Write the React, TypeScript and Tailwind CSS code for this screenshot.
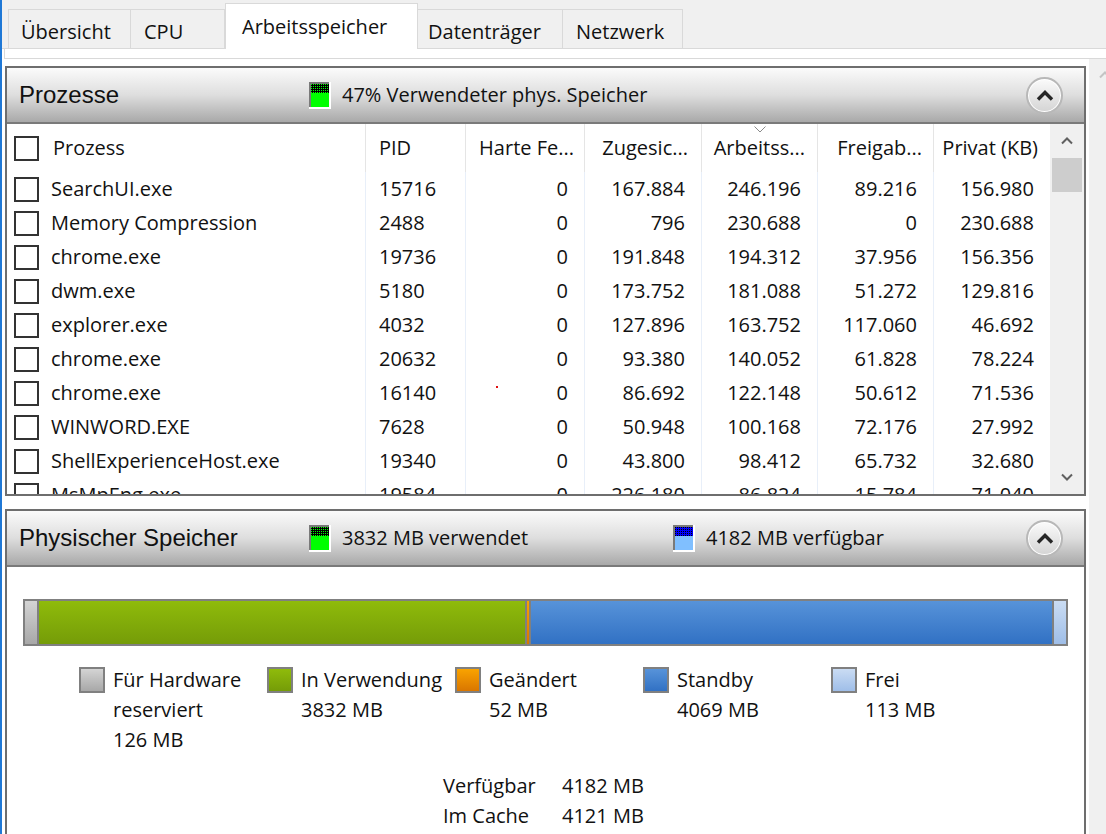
import React from 'react';

const rows = [
  ['SearchUI.exe', '15716', '0', '167.884', '246.196', '89.216', '156.980'],
  ['Memory Compression', '2488', '0', '796', '230.688', '0', '230.688'],
  ['chrome.exe', '19736', '0', '191.848', '194.312', '37.956', '156.356'],
  ['dwm.exe', '5180', '0', '173.752', '181.088', '51.272', '129.816'],
  ['explorer.exe', '4032', '0', '127.896', '163.752', '117.060', '46.692'],
  ['chrome.exe', '20632', '0', '93.380', '140.052', '61.828', '78.224'],
  ['chrome.exe', '16140', '0', '86.692', '122.148', '50.612', '71.536'],
  ['WINWORD.EXE', '7628', '0', '50.948', '100.168', '72.176', '27.992'],
  ['ShellExperienceHost.exe', '19340', '0', '43.800', '98.412', '65.732', '32.680'],
  ['MsMpEng.exe', '19584', '0', '226.180', '86.824', '15.784', '71.040'],
];

const legend = [
  { lines: ['Für Hardware', 'reserviert', '126 MB'], sw: 'from-[#d4d4d4] to-[#a8a8a8]' },
  { lines: ['In Verwendung', '3832 MB'], sw: 'from-[#8fbb0b] to-[#759c08]' },
  { lines: ['Geändert', '52 MB'], sw: 'from-[#f9a300] to-[#d97600]' },
  { lines: ['Standby', '4069 MB'], sw: 'from-[#5793d9] to-[#3171c4]' },
  { lines: ['Frei', '113 MB'], sw: 'from-[#cadcf3] to-[#9fbee8]' },
];

const Checkbox = () => <div className="w-[25px] h-[25px] border-2 border-[#333] bg-white shrink-0" />;

const Chevron = ({ down = false, color = '#606060' }: { down?: boolean; color?: string }) => (
  <svg width="12" height="8" viewBox="0 0 12 8">
    <path d={down ? 'M1 1.5 L6 6.5 L11 1.5' : 'M1 6.5 L6 1.5 L11 6.5'} stroke={color} strokeWidth="2" fill="none" />
  </svg>
);

const CollapseButton = () => (
  <div className="w-[37px] h-[37px] rounded-full border-2 border-[#b8b8b8] bg-linear-to-b from-[#fbfbfb] to-[#d4d4d4] flex items-center justify-center shadow-[inset_0_0_0_1px_#ffffff]">
    <svg width="18" height="11" viewBox="0 0 18 11">
      <path d="M2 9.5 L9 2.5 L16 9.5" stroke="#262626" strokeWidth="3.4" fill="none" strokeLinejoin="miter" />
    </svg>
  </div>
);

// kleiner Speicher-Chip wie im Task-Manager
const MemIcon = ({ blue = false }: { blue?: boolean }) => (
  <svg width="22" height="27" viewBox="0 0 22 27">
    <defs>
      <pattern id={blue ? 'dotsB' : 'dotsG'} width="2" height="2" patternUnits="userSpaceOnUse">
        <rect width="2" height="2" fill={blue ? '#0000ff' : '#000000'} />
        <rect width="1" height="1" fill={blue ? '#000000' : '#00ff00'} />
      </pattern>
    </defs>
    <rect x="0" y="0" width="22" height="27" fill="#ffffff" />
    <rect x="0" y="0" width="20" height="25" fill="#7a7a7a" />
    <rect x="2" y="2" width="18" height="9" fill={`url(#${blue ? 'dotsB' : 'dotsG'})`} />
    <rect x="2" y="11" width="18" height="14" fill={blue ? '#80bfff' : '#00ff00'} />
  </svg>
);

const PanelHeader = ({ title, children }: { title: string; children: React.ReactNode }) => (
  <div className="h-[56px] flex items-center border-b-2 border-[#7a7a7a] bg-linear-to-b from-[#fbfbfb] via-[#dedede] to-[#a9a9a9]">
    <div className="w-[302px] pl-[12px] text-[24px] text-[#111] font-['Liberation_Sans',Arial,sans-serif]">{title}</div>
    {children}
    <div className="ml-auto mr-[21px]">
      <CollapseButton />
    </div>
  </div>
);

export default function App() {
  const tabs = [
    { name: 'Übersicht', w: 'w-[123px]', pl: 'pl-[12px]' },
    { name: 'CPU', w: 'w-[94px]', pl: 'pl-[13px]' },
    { name: 'Arbeitsspeicher', w: 'w-[193px]', pl: 'pl-[16px]', active: true },
    { name: 'Datenträger', w: 'w-[145px]', pl: 'pl-[10px]' },
    { name: 'Netzwerk', w: 'w-[120px]', pl: 'pl-[13px]' },
  ];

  return (
    <div className="w-[1106px] h-[834px] flex bg-white overflow-hidden text-[20px] text-[#111] font-['Open_Sans','Noto_Sans',sans-serif]">
      <div className="w-[2px] shrink-0 bg-[#1f78d6]" />
      <div className="flex-1 flex flex-col min-w-0">
        {/* Tabs */}
        <div className="h-[49px] shrink-0 flex items-end pl-[6px] bg-[#f0f0f0] border-b border-[#d9d9d9]">
          {tabs.map((t) =>
            t.active ? (
              <div
                key={t.name}
                className={`${t.w} ${t.pl} h-[46px] -mb-px flex items-center bg-white border border-b-0 border-[#d9d9d9] relative z-10`}
              >
                {t.name}
              </div>
            ) : (
              <div
                key={t.name}
                className={`${t.w} ${t.pl} h-[39px] flex items-center pt-[5px] bg-[#f0f0f0] border border-b-0 border-l-0 first:border-l border-[#d9d9d9]`}
              >
                {t.name}
              </div>
            )
          )}
        </div>
        <div className="h-[10px] shrink-0 ml-[2px] border-l border-b border-[#d9d9d9]" />

        <div className="flex-1 flex min-h-0">
          <div className="w-[3px] shrink-0" />
          <div className="w-[1081px] shrink-0 pt-[7px] flex flex-col gap-[13px]">
            {/* Prozesse */}
            <div className="border-2 border-[#6e6e6e] flex flex-col">
              <PanelHeader title="Prozesse">
                <div className="flex items-center gap-[11px]">
                  <MemIcon />
                  <span>47% Verwendeter phys. Speicher</span>
                </div>
              </PanelHeader>
              <div className="h-[370px] flex overflow-hidden">
                <div className="w-[1043px] flex flex-col">
                  <div className="h-[48px] shrink-0 flex">
                    <div className="w-[359px] flex items-center pl-[7px] border-r border-[#e5e5e5]">
                      <Checkbox />
                      <span className="ml-[14px]">Prozess</span>
                    </div>
                    <div className="w-[100px] flex items-center pl-[13px] border-r border-[#e5e5e5]">PID</div>
                    <div className="w-[119px] flex items-center justify-end pr-[10px] border-r border-[#e5e5e5]">Harte Fe...</div>
                    <div className="w-[117px] flex items-center justify-end pr-[13px] border-r border-[#e5e5e5]">Zugesic...</div>
                    <div className="w-[116px] flex items-center justify-end pr-[12px] border-r border-[#e5e5e5] relative">
                      <div className="absolute top-[2px] left-[52px]">
                        <svg width="12" height="7" viewBox="0 0 12 7">
                          <path d="M0.5 0.5 L6 6 L11.5 0.5" stroke="#8a8a8a" strokeWidth="1" fill="none" />
                        </svg>
                      </div>
                      Arbeitss...
                    </div>
                    <div className="w-[116px] flex items-center justify-end pr-[11px] border-r border-[#e5e5e5]">Freigab...</div>
                    <div className="w-[116px] flex items-center justify-end pr-[12px]">Privat (KB)</div>
                  </div>
                  {rows.map((r, i) => (
                    <div key={i} className="h-[34px] shrink-0 flex">
                      <div className="w-[359px] flex items-center pl-[7px] border-r border-[#e8eff9]">
                        <Checkbox />
                        <span className="ml-[12px]">{r[0]}</span>
                      </div>
                      <div className="w-[100px] flex items-center pl-[13px] border-r border-[#e8eff9]">{r[1]}</div>
                      <div className="w-[119px] flex items-center justify-end pr-[16px] border-r border-[#e8eff9] relative">
                        {i === 6 && <div className="absolute left-[30px] top-[10px] w-[2px] h-[2px] bg-[#e01010]" />}
                        {r[2]}
                      </div>
                      <div className="w-[117px] flex items-center justify-end pr-[16px] border-r border-[#e8eff9]">{r[3]}</div>
                      <div className="w-[116px] flex items-center justify-end pr-[16px] border-r border-[#e8eff9]">{r[4]}</div>
                      <div className="w-[116px] flex items-center justify-end pr-[16px] border-r border-[#e8eff9]">{r[5]}</div>
                      <div className="w-[116px] flex items-center justify-end pr-[16px]">{r[6]}</div>
                    </div>
                  ))}
                </div>
                {/* Scrollbar */}
                <div className="w-[34px] bg-[#f0f0f0] flex flex-col">
                  <div className="h-[34px] flex items-center justify-center">
                    <Chevron />
                  </div>
                  <div className="h-[34px] mx-[2px] bg-[#cdcdcd]" />
                  <div className="flex-1" />
                  <div className="h-[34px] flex items-center justify-center">
                    <Chevron down />
                  </div>
                </div>
              </div>
            </div>

            {/* Physischer Speicher */}
            <div className="border-2 border-b-0 border-[#6e6e6e] flex-1 flex flex-col">
              <PanelHeader title="Physischer Speicher">
                <div className="w-[364px] flex items-center gap-[11px]">
                  <MemIcon />
                  <span>3832 MB verwendet</span>
                </div>
                <div className="flex items-center gap-[11px]">
                  <MemIcon blue />
                  <span>4182 MB verfügbar</span>
                </div>
              </PanelHeader>
              <div className="flex-1 bg-white pt-[32px] px-[16px]">
                <div className="h-[47px] border-2 border-[#808080] flex">
                  <div className="w-[14px] border-r-2 border-[#808080] bg-linear-to-b from-[#d4d4d4] to-[#a8a8a8]" />
                  <div className="w-[488px] border-r-2 border-[#808080] bg-linear-to-b from-[#8fbb0b] to-[#759c08]" />
                  <div className="w-[4px] border-r-2 border-[#808080] bg-linear-to-b from-[#f9a300] to-[#d97600]" />
                  <div className="flex-1 border-r-2 border-[#808080] bg-linear-to-b from-[#5793d9] to-[#3171c4]" />
                  <div className="w-[12px] bg-linear-to-b from-[#cadcf3] to-[#9fbee8]" />
                </div>
                <div className="flex mt-[19px] ml-[56px]">
                  {legend.map((l) => (
                    <div key={l.lines[0]} className="w-[188px] flex gap-[8px]">
                      <div className={`w-[26px] h-[26px] mt-[2px] shrink-0 border-2 border-[#808080] bg-linear-to-b ${l.sw}`} />
                      <div className="leading-[30px]">
                        {l.lines.map((s) => (
                          <div key={s}>{s}</div>
                        ))}
                      </div>
                    </div>
                  ))}
                </div>
                <div className="mt-[16px] ml-[420px] grid grid-cols-[119px_auto] leading-[30px]">
                  <div>Verfügbar</div>
                  <div>4182 MB</div>
                  <div>Im Cache</div>
                  <div>4121 MB</div>
                </div>
              </div>
            </div>
          </div>
          <div className="w-[3px] shrink-0" />
          <div className="flex-1 bg-[#f0f0f0] relative overflow-hidden">
            <div className="absolute left-[10px] top-[12px]">
              <Chevron color="#c4c4c4" />
            </div>
          </div>
        </div>
      </div>
    </div>
  );
}
